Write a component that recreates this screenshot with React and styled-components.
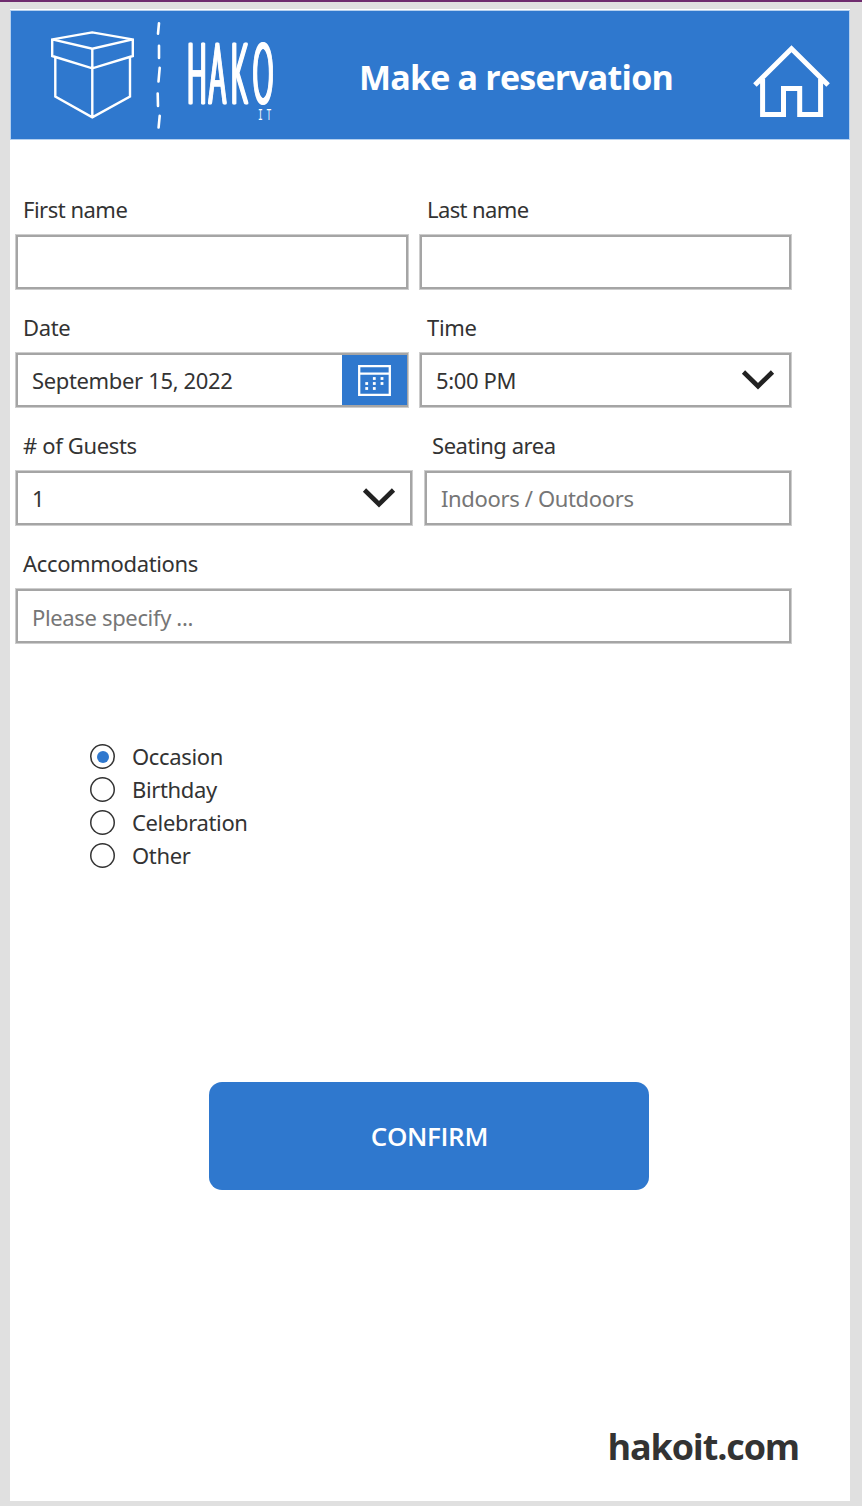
import React, { useState } from "react";
import styled, { createGlobalStyle } from "styled-components";

const blue = "#2f78ce";

const GlobalStyle = createGlobalStyle`
  *, *::before, *::after { box-sizing: border-box; }
  body { margin: 0; background: #e0e0e0; }
`;

const Shell = styled.div`
  height: 1506px;
  padding: 7px 12px 5px 10px;
  border-top: 2px solid #6f2c6f;
  background: #e0e0e0;
  font-family: "Noto Sans", "Open Sans", sans-serif;
  color: #333;
  overflow: hidden;
`;

const Page = styled.main`
  display: flex;
  flex-direction: column;
  height: 1492px;
  padding: 2px 1px 0;
  background: #fff;
`;

const Header = styled.header`
  display: flex;
  flex: none;
  height: 128px;
  background: ${blue};
  box-shadow: 0 0 0 1px #b4d0ef;
`;

const Title = styled.h1`
  flex: none;
  width: 400px;
  margin: 0;
  padding: 42px 0 0 10px;
  font: 700 34px/48px "Open Sans", sans-serif;
  letter-spacing: -0.8px;
  color: #fff;
  white-space: nowrap;
`;

const LogoArt = styled.svg`
  flex: none;
  width: 338px;
  height: 128px;
`;

const HomeButton = styled.button`
  width: 84px;
  height: 80px;
  margin-top: 31px;
  padding: 0;
  border: 0;
  background: none;
  svg { display: block; }
`;

const Form = styled.form`
  display: flex;
  flex-direction: column;
  gap: 23px;
  width: 775px;
  margin: 55px 0 0 5px;
`;

const Row = styled.div`
  display: flex;
  justify-content: space-between;
`;

const Field = styled.label`
  display: flex;
  flex-direction: column;
  gap: 11px;
  width: ${(p) => p.$width}px;
`;

const Caption = styled.span`
  padding-left: 7px;
  font-size: 22px;
  line-height: 30px;
  letter-spacing: ${(p) => p.$spacing ?? -0.35}px;
  white-space: nowrap;
`;

const Control = styled.span`
  display: flex;
  align-items: center;
  justify-content: space-between;
  height: 54px;
  padding-left: 14px;
  border: 2px solid #a5a5a5;
  box-shadow: 0 0 0 1px #cdcdcd;
  background: #fff;
`;

const Value = styled.span`
  padding-top: ${(p) => p.$drop || 0}px;
  font-size: 22px;
  line-height: 30px;
  letter-spacing: -0.35px;
  color: ${(p) => (p.$muted ? "#767676" : "#333")};
  white-space: nowrap;
`;

const RadioText = styled(Value)`
  padding-bottom: 2px;
`;

const CalendarButton = styled.span`
  display: flex;
  align-items: center;
  justify-content: center;
  width: 65px;
  height: 50px;
  margin-right: -1px;
  background: ${blue};
`;

const ChevronArt = styled.svg`
  flex: none;
  width: 34px;
  height: 22px;
  margin-right: 14px;
`;

const RadioList = styled.div`
  display: flex;
  flex-direction: column;
  margin: 97px 0 0 79px;
`;

const RadioRow = styled.label`
  display: flex;
  align-items: center;
  gap: 17px;
  height: 33px;
`;

const Dot = styled.span`
  display: flex;
  align-items: center;
  justify-content: center;
  width: 25px;
  height: 25px;
  border-radius: 50%;
  box-shadow: inset 0 0 0 1.5px #333;
  &::after {
    content: "";
    width: 12px;
    height: 12px;
    border-radius: 50%;
    background: ${(p) => (p.$on ? blue : "transparent")};
  }
`;

const Confirm = styled.button`
  width: 440px;
  height: 108px;
  margin: 210px 0 0 198.4px;
  padding: 0;
  border: 0;
  border-radius: 13px;
  background: ${blue};
  color: #fff;
  font: 600 26px/36px "Open Sans", sans-serif;
  letter-spacing: -0.35px;
`;

const Site = styled.footer`
  margin: auto 50px 29px 0;
  text-align: right;
  font: 700 36px/50px "Open Sans", sans-serif;
  letter-spacing: -1.15px;
`;

const Thickened = styled.g`
  filter: drop-shadow(1px 0 0 #fff) drop-shadow(-1px 0 0 #fff);
`;

const LogoWord = styled.text`
  font: 300 82px Lato, sans-serif;
  fill: #fff;
  stroke: #fff;
  stroke-width: 2.6px;
  stroke-linejoin: round;
`;

const LogoSuffix = styled.text`
  font: 400 16px "Liberation Mono", monospace;
  fill: #fff;
`;

function Logo() {
  return (
    <LogoArt viewBox="11 11 338 128" aria-label="Hako IT">
      <g fill="none" stroke="#fff" strokeWidth="2.4">
        <path d="M92.3 32.4 52.2 39.4V56L92.3 68.3 132.8 56V39.4ZM52.2 39.4 92.3 48.7 132.8 39.4M92.3 48.7V117.3M55.3 57V96.6L92.3 117.3 130 96.6V57" />
        <path strokeLinecap="round" strokeWidth="2.6" d="M159 23.2 158 33.7M159 45.8V58M159.7 67.8 158.5 81.5M157.7 93.5 158 106M159.7 115.8 158.6 127.5" />
      </g>
      <Thickened>
        <LogoWord transform="translate(0 102.8) scale(.31 1)" x="604 674 745 816">HAKO</LogoWord>
      </Thickened>
      <LogoSuffix transform="translate(0 119.5) scale(.5 1.05)" x="516 533">IT</LogoSuffix>
    </LogoArt>
  );
}

function Home() {
  return (
    <svg width="84" height="80" viewBox="749 42 84 80" fill="none" stroke="#fff" strokeWidth="5">
      <path d="M754.9 85 791.5 48.8 828.1 85M762.6 79V114.5H783.5V88.5H799.7V114.5H820.6V79" />
    </svg>
  );
}

function Chevron() {
  return (
    <ChevronArt viewBox="0 0 34 22" fill="none" stroke="#222" strokeWidth="4.6">
      <path d="M2.5 3 17 17.2 31.5 3" />
    </ChevronArt>
  );
}

const calendarDots = [[16.3, 13.5], [24, 13.5], [8.7, 18.5], [16.3, 18.5], [24, 18.5], [8.7, 23.5], [16.3, 23.5]];

function Calendar() {
  return (
    <svg width="33" height="31" viewBox="0 0 33 31">
      <path d="M1.2 1.2H31.8V29.8H1.2ZM1 8.7H32" fill="none" stroke="#fff" strokeWidth="2.3" />
      {calendarDots.map(([x, y]) => (
        <rect key={`${x}-${y}`} x={x - 1.4} y={y - 1.4} width="2.8" height="2.8" fill="#fff" />
      ))}
    </svg>
  );
}

const occasions = ["Occasion", "Birthday", "Celebration", "Other"];

export default function App() {
  const [occasion, setOccasion] = useState("Occasion");
  return (
    <Shell>
      <GlobalStyle />
      <Page>
        <Header>
          <Logo />
          <Title>Make a reservation</Title>
          <HomeButton aria-label="Home"><Home /></HomeButton>
        </Header>
        <Form>
          <Row>
            <Field $width={392}>
              <Caption $spacing={-0.5}>First name</Caption>
              <Control />
            </Field>
            <Field $width={371}>
              <Caption $spacing={-0.6}>Last name</Caption>
              <Control />
            </Field>
          </Row>
          <Row>
            <Field $width={392}>
              <Caption>Date</Caption>
              <Control>
                <Value>September 15, 2022</Value>
                <CalendarButton><Calendar /></CalendarButton>
              </Control>
            </Field>
            <Field $width={371}>
              <Caption>Time</Caption>
              <Control>
                <Value>5:00 PM</Value>
                <Chevron />
              </Control>
            </Field>
          </Row>
          <Row>
            <Field $width={396}>
              <Caption># of Guests</Caption>
              <Control>
                <Value>1</Value>
                <Chevron />
              </Control>
            </Field>
            <Field $width={366}>
              <Caption $spacing={-0.45}>Seating area</Caption>
              <Control>
                <Value $muted>Indoors / Outdoors</Value>
              </Control>
            </Field>
          </Row>
          <Field $width={775}>
            <Caption>Accommodations</Caption>
            <Control>
              <Value $muted $drop={1}>Please specify ...</Value>
            </Control>
          </Field>
        </Form>
        <RadioList>
          {occasions.map((name) => (
            <RadioRow key={name} onClick={() => setOccasion(name)}>
              <Dot $on={name === occasion} />
              <RadioText>{name}</RadioText>
            </RadioRow>
          ))}
        </RadioList>
        <Confirm>CONFIRM</Confirm>
        <Site>hakoit.com</Site>
      </Page>
    </Shell>
  );
}
